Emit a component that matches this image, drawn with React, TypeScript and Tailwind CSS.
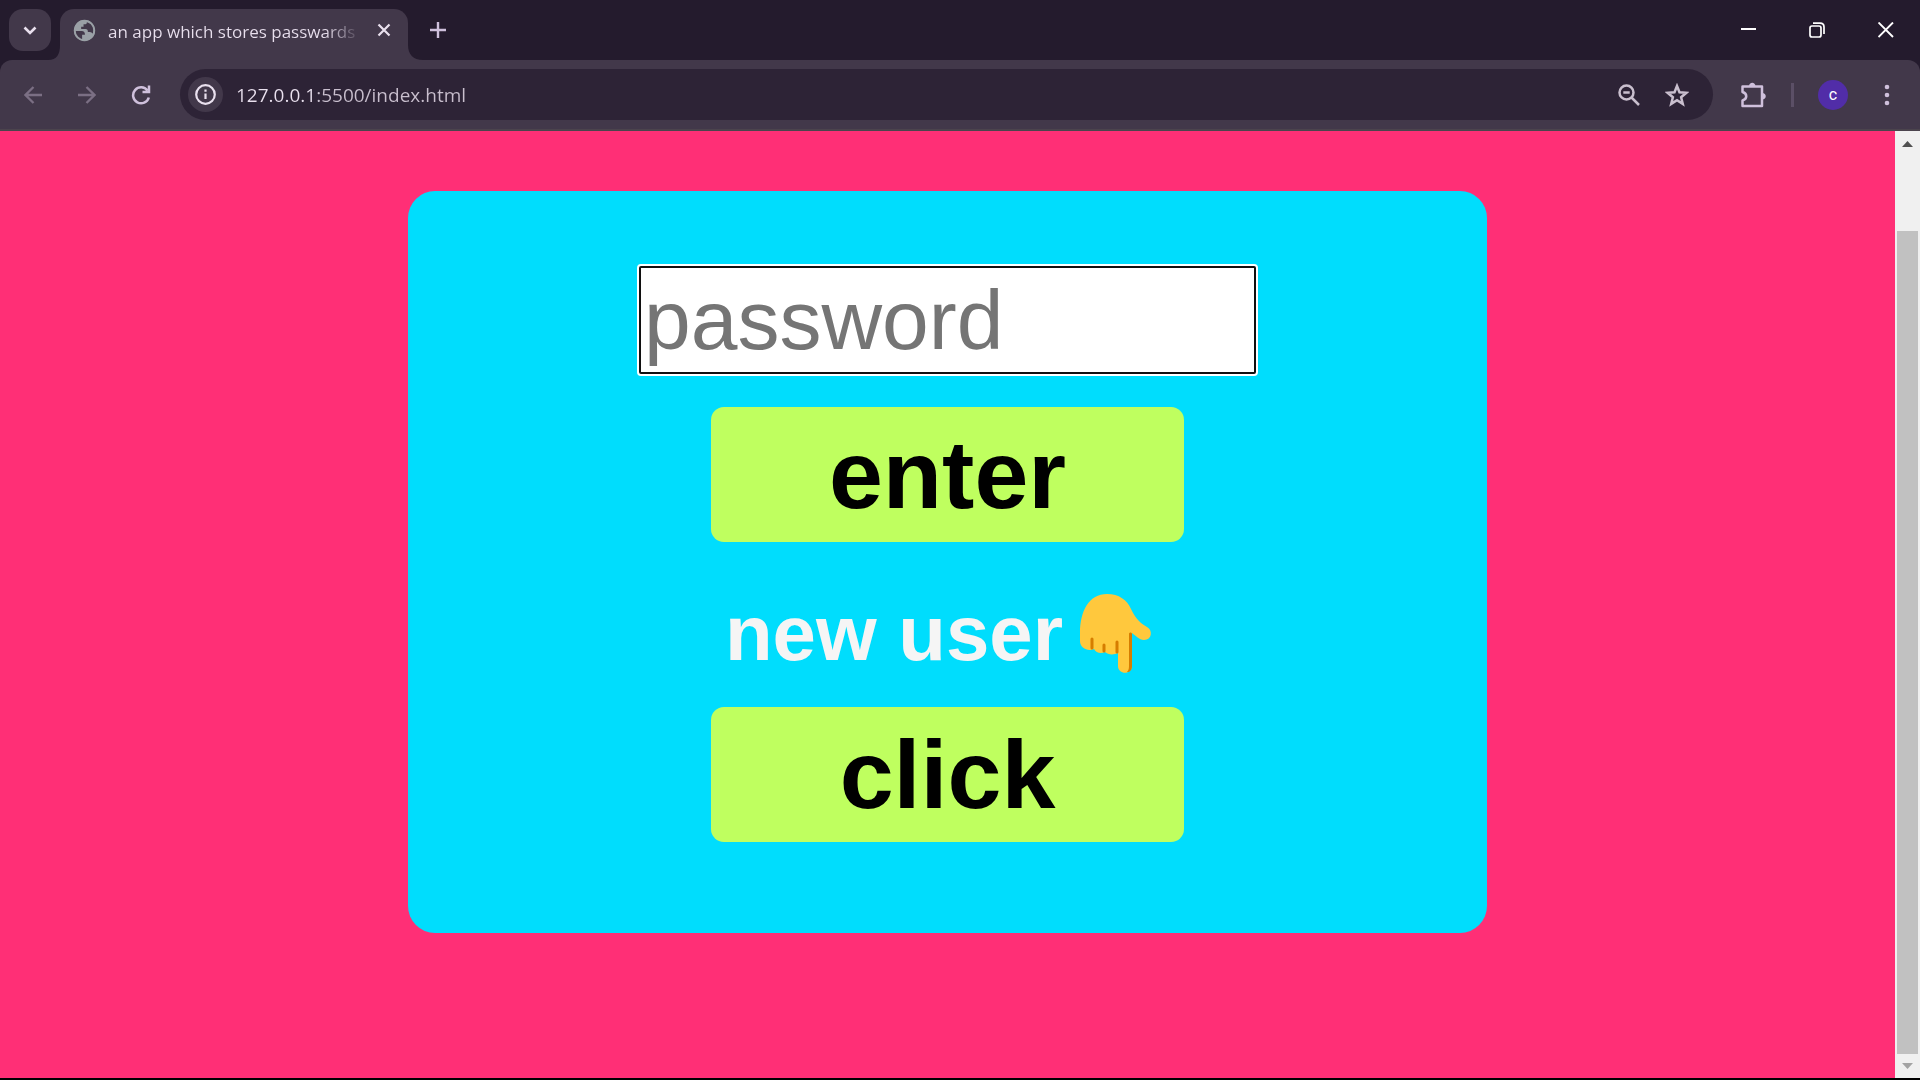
import React from "react";

function PointingHand() {
  return (
    <svg viewBox="0 0 107 90" className="h-[90px] w-[107px]" role="img" aria-label="pointing down">
      <path
        fill="#FFC83D"
        d="M17 45C17 23 26 6 44 6C56 6 64 12 68 21C73 32 79 36 84 39C90 42 89 52 81 52C76 52 72 47 69 45V78C69 87 55 87 55 78V65C51 67 45 67 42 64C38 66 33 65 31 61C25 64 17 60 17 53Z"
      />
      <path d="M29 51V60M41 57V63M54 54V64" stroke="#D67D00" strokeWidth="3" strokeLinecap="round" fill="none" />
      <path fill="#D67D00" d="M66 46C66 44 69 44 69 46V78C69 82 67 84 64 84C66 82 66 80 66 76Z" />
    </svg>
  );
}

function TabStrip() {
  return (
    <header className="flex h-15 items-stretch bg-[#241b2d] text-[#e9e0ee]">
      <button aria-label="Search tabs" className="ml-[9px] mt-[9px] flex h-[42px] w-[42px] items-center justify-center rounded-[14px] bg-[#42384a]">
        <svg width="16" height="16" viewBox="0 0 16 16" fill="none" stroke="currentColor" strokeWidth="2.6">
          <path d="M2.500 5.500L8 11L13.500 5.500" />
        </svg>
      </button>
      <div className="flex w-3 shrink-0 items-end -ml-[3px]">
        <svg width="15" height="15" viewBox="0 0 15 15" className="shrink-0">
          <path fill="#42384a" d="M15 0V15H0C9 15 12 9 12 0Z" />
        </svg>
      </div>
      <div className="mt-[9px] flex w-[348px] items-start rounded-t-[14px] bg-[#42384a] pl-[13px]">
        <svg width="23" height="23" viewBox="0 0 24 24" className="mt-[10px] shrink-0">
          <circle cx="12" cy="12" r="11" fill="#9aa0a6" />
          <path
            fill="#42384a"
            d="M2.500 12.500H9C11.500 12.500 12.500 14 12.500 16.500H9.500V21.500C5.500 20.500 2.500 17 2.500 12.500ZM14.500 3C14.500 5 13.500 5.500 12 5.500H11V8H8.500V10.500H13C15 10.500 15.500 11.500 15.500 13.500H17.500C19 13.500 20 14.500 20.500 15.500C22.500 11 21 6 16.500 3.500Z"
          />
          <circle cx="12" cy="12" r="10.200" fill="none" stroke="#9aa0a6" strokeWidth="1.900" />
        </svg>
        <span className="ml-[12px] mt-[11px] w-[258px] whitespace-nowrap bg-linear-to-r from-[#e9e0ee] from-84% to-transparent to-98% bg-clip-text font-['Open_Sans',sans-serif] text-[17px] leading-6 text-transparent">
          an app which stores passwards a
        </span>
        <button aria-label="Close tab" className="ml-[10px] mt-[13px]">
          <svg width="16" height="16" viewBox="0 0 16 16" stroke="currentColor" strokeWidth="2.200">
            <path d="M2.500 2.500L13.500 13.500M13.500 2.500L2.500 13.500" />
          </svg>
        </button>
      </div>
      <div className="flex w-[15px] items-end">
        <svg width="15" height="15" viewBox="0 0 15 15">
          <path fill="#42384a" d="M0 0V15H15C5 15 0 9 0 0Z" />
        </svg>
      </div>
      <button aria-label="New tab" className="ml-[7px] flex w-4 items-center justify-center text-[#cfc0dc]">
        <svg width="16" height="16" viewBox="0 0 16 16" stroke="currentColor" strokeWidth="2.400" className="shrink-0">
          <path d="M8 0V16M0 8H16" />
        </svg>
      </button>
      <div className="ml-auto flex text-white">
        <button aria-label="Minimize" className="flex w-[68px] items-center justify-center">
          <svg width="16" height="16" viewBox="0 0 16 16" stroke="currentColor" strokeWidth="2">
            <path d="M0 7H15" />
          </svg>
        </button>
        <button aria-label="Restore" className="flex w-[68px] items-center justify-center">
          <svg width="16" height="16" viewBox="0 0 16 16" fill="none" stroke="currentColor" strokeWidth="1.700">
            <rect x="1" y="4" width="11" height="11" rx="2" />
            <path d="M4 1.200H11C13.500 1.200 15 2.700 15 5V12" />
          </svg>
        </button>
        <button aria-label="Close" className="flex w-[69px] items-center justify-center">
          <svg width="16" height="16" viewBox="0 0 16 16" stroke="currentColor" strokeWidth="1.900">
            <path d="M0.500 0.500L15 15M15 0.500L0.500 15" />
          </svg>
        </button>
      </div>
    </header>
  );
}

function Toolbar() {
  return (
    <div className="bg-[#241b2d]">
      <nav className="flex h-[71px] items-center rounded-t-xl border-b-2 border-[#4b444d] bg-[#42384a] text-[#cfc0dc]">
        <button aria-label="Back" className="ml-6 text-[#7b6f84]">
          <svg width="18" height="18" viewBox="0 0 18 18" fill="none" stroke="currentColor" strokeWidth="2.300">
            <path d="M18 9H2M9.500 1L1.500 9L9.500 17" />
          </svg>
        </button>
        <button aria-label="Forward" className="ml-9 text-[#7b6f84]">
          <svg width="18" height="18" viewBox="0 0 18 18" fill="none" stroke="currentColor" strokeWidth="2.300">
            <path d="M0 9H16M8.500 1L16.500 9L8.500 17" />
          </svg>
        </button>
        <button aria-label="Reload" className="ml-[35px]">
          <svg width="20" height="20" viewBox="0 0 20 20" fill="none" stroke="currentColor" strokeWidth="2.500">
            <path d="M16.500 5.500A8 8 0 1 0 17.800 12.500M18 0.500V7H11.500" />
          </svg>
        </button>
        <div className="ml-[29px] flex h-[51px] flex-1 items-center rounded-full bg-[#2d2336] pl-2 pr-6">
          <button aria-label="Site information" className="flex h-[35px] w-[35px] items-center justify-center rounded-full bg-[#42384a] text-[#e9e0ee]">
            <svg width="21" height="21" viewBox="0 0 21 21" fill="none" stroke="currentColor" strokeWidth="2.200">
              <circle cx="10.500" cy="10.500" r="9.300" />
              <path d="M10.500 9.500V15M10.500 5.500V7.700" strokeWidth="2.200" />
            </svg>
          </button>
          <input
            aria-label="Address"
            defaultValue="127.0.0.1:5500/index.html"
            className="ml-[13px] min-w-0 flex-1 bg-linear-to-r from-[#e9e0ee] from-[80px] to-[#c9bfce] to-[80px] bg-clip-text font-['Open_Sans',sans-serif] text-[19px] leading-8 text-transparent outline-none"
          />
          <button aria-label="Zoom">
            <svg width="22" height="22" viewBox="0 0 22 22" fill="none" stroke="#c9bfce" strokeWidth="2.500">
              <circle cx="8.500" cy="8.500" r="7" />
              <path d="M13.500 13.500L21 21M5.300 8.500H11.700" />
            </svg>
          </button>
          <button aria-label="Bookmark this page" className="ml-[25px]">
            <svg width="24" height="24" viewBox="0 0 24 24" fill="none" stroke="#c9bfce" strokeWidth="2.500">
              <path d="M12 3L14.500 9.300L21.300 9.800L16.100 14.200L17.800 20.900L12 17.200L6.200 20.900L7.900 14.200L2.700 9.800L9.500 9.300Z" />
            </svg>
          </button>
        </div>
        <button aria-label="Extensions" className="ml-[27px]">
          <svg width="26" height="26" viewBox="0 0 26 26">
            <path
              fill="none"
              stroke="currentColor"
              strokeWidth="2.500"
              strokeLinejoin="round"
              d="M2.500 4.500H22V24H2.500V18.500C7.500 17 7.500 11.500 2.500 10Z"
            />
            <path fill="currentColor" d="M9 4.500C9 -0.500 15.500 -0.500 15.500 4.500ZM22 11C27 11 27 17.500 22 17.500Z" />
          </svg>
        </button>
        <span className="ml-[25px] h-6 w-[3px] bg-[#5b4f66]" />
        <button aria-label="Profile" className="ml-6 flex h-[30px] w-[30px] items-center justify-center rounded-full bg-[#512da8] font-[Roboto,sans-serif] text-[16px] text-white">
          c
        </button>
        <button aria-label="Menu" className="ml-9 mr-[30px]">
          <svg width="6" height="22" viewBox="0 0 6 22" fill="currentColor">
            <circle cx="3" cy="3" r="2.300" />
            <circle cx="3" cy="11" r="2.300" />
            <circle cx="3" cy="19" r="2.300" />
          </svg>
        </button>
      </nav>
    </div>
  );
}

function ScrollBar() {
  return (
    <div className="flex w-[25px] flex-col items-center bg-[#f0f0f0]" aria-hidden="true">
      <svg width="11" height="6" viewBox="0 0 11 6" className="mt-[10px] shrink-0">
        <path fill="#505050" d="M0 6L5.500 0L11 6Z" />
      </svg>
      <div className="mb-[9px] mt-[84px] w-[21px] flex-1 bg-[#c1c1c1]" />
      <svg width="11" height="6" viewBox="0 0 11 6" className="mb-[9px] shrink-0">
        <path fill="#a3a3a3" d="M0 0L5.500 6L11 0Z" />
      </svg>
    </div>
  );
}

function LimeButton({ children }: { children: React.ReactNode }) {
  return (
    <button className="flex h-[135px] w-[473px] items-center justify-center rounded-[13px] bg-[#bfff5f] text-[97px] leading-[110px] font-bold text-black">
      {children}
    </button>
  );
}

export default function App() {
  return (
    <div className="flex h-screen flex-col overflow-hidden border-b-2 border-black font-['Liberation_Sans',Arial,sans-serif]">
      <TabStrip />
      <Toolbar />
      <div className="flex min-h-0 flex-1">
        <main className="flex flex-1 flex-col items-center bg-[#ff2f76] pt-[60px]">
          <section className="flex w-[57%] max-w-[1079px] flex-col items-center rounded-[27px] bg-[#00ddfd] pb-[91px] pt-[73px]">
            <input
              type="text"
              aria-label="password"
              placeholder="password"
              className="h-28 w-[621px] rounded-[4px] border-3 border-white bg-white px-1 text-[84px] leading-[100px] text-black outline-2 -outline-offset-4 outline-[#101010] placeholder:text-[#757575]"
            />
            <div className="mt-[31px]">
              <LimeButton>enter</LimeButton>
            </div>
            <div className="flex h-[165px] items-center justify-center pt-4 text-[78px] leading-[90px] font-bold text-[#f5f5f5]">
              <h1>new user</h1>
              <PointingHand />
            </div>
            <LimeButton>click</LimeButton>
          </section>
        </main>
        <ScrollBar />
      </div>
    </div>
  );
}
